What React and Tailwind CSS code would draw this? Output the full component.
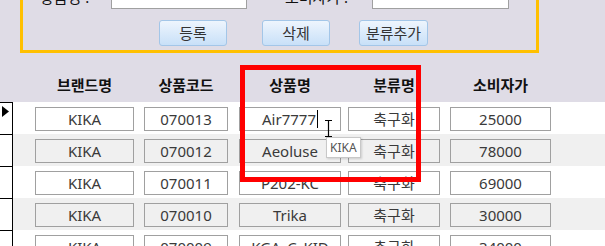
import React from "react";

const FONT = { fontFamily: '"Noto Sans", "Noto Sans CJK KR", sans-serif' };

// widths and left margins of the five data columns
const COLS = [
  { w: "w-[99px]", ml: "ml-[22px]" },
  { w: "w-[84px]", ml: "ml-[10px]" },
  { w: "w-[102px]", ml: "ml-[11px]" },
  { w: "w-[92px]", ml: "ml-[7px]" },
  { w: "w-[101px]", ml: "ml-[10px]" },
];

const HEADERS = ["브랜드명", "상품코드", "상품명", "분류명", "소비자가"];

const ROWS = [
  ["KIKA", "070013", "Air7777", "축구화", "25000"],
  ["KIKA", "070012", "Aeoluse", "축구화", "78000"],
  ["KIKA", "070011", "P202-KC", "축구화", "69000"],
  ["KIKA", "070010", "Trika", "축구화", "30000"],
  ["KIKA", "070009", "KGA_C_KID", "축구화", "34000"],
];

function Btn({ children, w }) {
  return (
    <button
      className={`${w} h-[26px] rounded-[3px] border border-[#a3c6e8] bg-gradient-to-b from-[#eef5fd] to-[#c8e0f8] text-[15px] text-[#333]`}
    >
      {children}
    </button>
  );
}

export default function App() {
  return (
    <div
      className="relative h-[246px] w-[605px] overflow-hidden bg-[#dfdce6]"
      style={FONT}
    >
      {/* input panel (top edge scrolled out of view) */}
      <div className="ml-[20px] flex h-[53px] w-[519px] flex-col border-x-[3px] border-b-[3px] border-[#ffc000]">
        <div className="-mt-[15px] flex h-[24px] shrink-0 items-center">
          <span className="ml-[17px] w-[71px] text-[15px] text-[#111]">상품명 :</span>
          <div className="h-[24px] w-[136px] border border-[#a0a0a0] bg-white" />
          <span className="ml-[38px] w-[87px] text-[15px] text-[#111]">소비자가 :</span>
          <div className="h-[24px] w-[137px] border border-[#a0a0a0] bg-white" />
        </div>
        <div className="mt-[11px] flex">
          <div className="ml-[136px]">
            <Btn w="w-[68px]">등록</Btn>
          </div>
          <div className="ml-[35px]">
            <Btn w="w-[68px]">삭제</Btn>
          </div>
          <div className="ml-[29px]">
            <Btn w="w-[69px]">분류추가</Btn>
          </div>
        </div>
      </div>

      {/* header */}
      <div className="flex h-[49px] items-end pb-[6px]">
        <div className="w-[13px]" />
        {HEADERS.map((h, i) => (
          <div
            key={h}
            className={`${COLS[i].w} ${COLS[i].ml} text-center text-[15px] font-bold leading-[22px] text-[#111]`}
          >
            {h}
          </div>
        ))}
      </div>

      {/* rows */}
      {ROWS.map((r, ri) => {
        const odd = ri % 2 === 1;
        return (
          <div key={ri} className={`flex h-[32px] ${odd ? "bg-[#f0f0f0]" : "bg-white"}`}>
            <div className="flex w-[13px] items-start border-r border-t border-black bg-white pt-[3px]">
              {ri === 0 && (
                <svg width="8" height="11" viewBox="0 0 8 11" className="ml-[2px]">
                  <path d="M0 0 L7 5.5 L0 11 Z" fill="#000" />
                </svg>
              )}
            </div>
            {r.map((v, ci) => (
              <div
                key={ci}
                className={`${COLS[ci].w} ${COLS[ci].ml} mt-[5px] flex h-[24px] items-center justify-center border border-[#a0a0a0] text-[15px] text-[#3a3a3a] ${odd ? "bg-[#f0f0f0]" : "bg-white"}`}
              >
                {v}
                {ri === 0 && ci === 2 && (
                  <span className="ml-px inline-block h-[18px] w-px bg-black" />
                )}
              </div>
            ))}
          </div>
        );
      })}

      {/* red highlight annotation */}
      <div className="pointer-events-none absolute left-[240px] top-[65px] h-[117px] w-[181px] border-[5px] border-[#ff0000]" />

      {/* I-beam cursor */}
      <svg
        className="absolute left-[324px] top-[120px]"
        width="9"
        height="17"
        viewBox="0 0 9 17"
      >
        <path d="M1 0.5 H8 M4.5 0.5 V16.5 M1 16.5 H8" stroke="#000" strokeWidth="1.2" fill="none" />
      </svg>

      {/* tooltip */}
      <div className="absolute left-[326px] top-[137px] flex h-[21px] items-center border border-[#c8c8c8] bg-white px-[3px] text-[12px] text-[#555] shadow-[1px_1px_2px_rgba(0,0,0,0.15)]">
        KIKA
      </div>
    </div>
  );
}
